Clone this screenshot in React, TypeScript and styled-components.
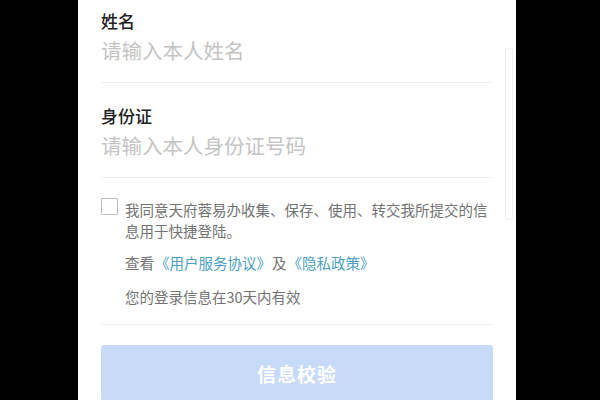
import React from "react";
import styled, { createGlobalStyle } from "styled-components";

const GlobalStyle = createGlobalStyle`
  html, body {
    margin: 0;
    padding: 0;
    background: #000;
  }
  body {
    font-family: "Noto Sans CJK SC", "Noto Sans", sans-serif;
  }
`;

const Screen = styled.div`
  width: 600px;
  height: 400px;
  overflow: hidden;
  background: #000;
  display: flex;
  padding-left: 78px;
  box-sizing: border-box;
`;

const Panel = styled.section`
  position: relative;
  width: 438px;
  height: 400px;
  background: #fff;
  padding: 0 23px;
  box-sizing: border-box;
  overflow: hidden;
`;

const ScrollHint = styled.div`
  position: absolute;
  right: 3px;
  top: 48px;
  width: 6px;
  height: 170px;
  border: 1px solid #f1f1f1;
  border-left-color: #e9e9e9;
  border-radius: 3px;
`;

const Field = styled.div<{ $top: number }>`
  display: flex;
  flex-direction: column;
  gap: 2px;
  padding: ${(p) => p.$top}px 0 17px;
  border-bottom: 1px solid #f0f0f0;
`;

const Label = styled.div`
  font-size: 17px;
  line-height: 24px;
  color: #222;
  font-weight: 500;
`;

const Placeholder = styled.div`
  font-size: 20.5px;
  line-height: 30px;
  color: #c4c4c4;
`;

const Agreement = styled.div`
  display: flex;
  flex-direction: column;
  padding: 21px 0 17px;
  border-bottom: 1px solid #f0f0f0;
`;

const CheckRow = styled.div`
  display: flex;
  align-items: flex-start;
  gap: 7px;
`;

const Box = styled.span`
  flex: none;
  width: 15px;
  height: 15px;
  margin-top: -1px;
  border: 1px solid #bdbdbd;
  border-radius: 1px;
`;

const Note = styled.div<{ $gap?: number }>`
  font-size: 14.5px;
  line-height: 21px;
  color: #737373;
  margin-top: ${(p) => p.$gap ?? 0}px;
`;

const Indented = styled(Note)`
  padding-left: 24px;
`;

const Link = styled.span`
  color: #4aa0c0;
  margin: 0 1px;
`;

const Submit = styled.button`
  display: flex;
  align-items: center;
  justify-content: center;
  width: 100%;
  height: 56px;
  margin-top: 20px;
  border: none;
  border-radius: 3px;
  background: #c7dbf8;
  color: #fff;
  font-family: inherit;
  font-size: 19px;
  font-weight: 700;
  letter-spacing: 1px;
`;

export default function App() {
  return (
    <>
      <GlobalStyle />
      <Screen>
        <Panel>
          <ScrollHint />
          <Field $top={9}>
            <Label>姓名</Label>
            <Placeholder>请输入本人姓名</Placeholder>
          </Field>
          <Field $top={21}>
            <Label>身份证</Label>
            <Placeholder>请输入本人身份证号码</Placeholder>
          </Field>
          <Agreement>
            <CheckRow>
              <Box />
              <Note>我同意天府蓉易办收集、保存、使用、转交我所提交的信息用于快捷登陆。</Note>
            </CheckRow>
            <Indented $gap={11}>
              查看<Link>《用户服务协议》</Link>及<Link>《隐私政策》</Link>
            </Indented>
            <Indented $gap={13}>您的登录信息在30天内有效</Indented>
          </Agreement>
          <Submit>信息校验</Submit>
        </Panel>
      </Screen>
    </>
  );
}
